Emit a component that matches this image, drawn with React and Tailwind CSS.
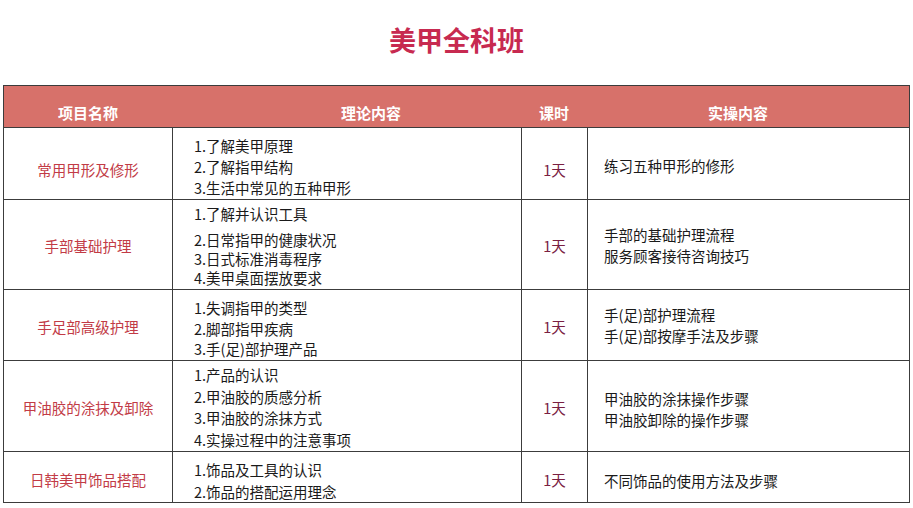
import React from "react";

const rows = [
  {
    name: "常用甲形及修形",
    h: "h-[72px]",
    side: "pt-[13px]",
    theory: ["1.了解美甲原理", "2.了解指甲结构", "3.生活中常见的五种甲形"],
    theoryCls: "pt-[7px] leading-[21px]",
    first: "",
    practice: ["练习五种甲形的修形"],
    practiceCls: "pt-[3px]",
  },
  {
    name: "手部基础护理",
    h: "h-[90px]",
    side: "pt-[2px]",
    theory: ["1.了解并认识工具", "2.日常指甲的健康状况", "3.日式标准消毒程序", "4.美甲桌面摆放要求"],
    theoryCls: "pt-[4px] leading-[19px]",
    first: "mb-[7px]",
    practice: ["手部的基础护理流程", "服务顾客接待咨询技巧"],
    practiceCls: "pt-[0px]",
  },
  {
    name: "手足部高级护理",
    h: "h-[71px]",
    side: "pt-[4px]",
    theory: ["1.失调指甲的类型", "2.脚部指甲疾病", "3.手(足)部护理产品"],
    theoryCls: "pt-[8px] leading-[20.5px]",
    first: "",
    practice: ["手(足)部护理流程", "手(足)部按摩手法及步骤"],
    practiceCls: "pt-[0px]",
  },
  {
    name: "甲油胶的涂抹及卸除",
    h: "h-[91px]",
    side: "pt-[4px]",
    theory: ["1.产品的认识", "2.甲油胶的质感分析", "3.甲油胶的涂抹方式", "4.实操过程中的注意事项"],
    theoryCls: "pt-[3px] leading-[21.7px]",
    first: "",
    practice: ["甲油胶的涂抹操作步骤", "甲油胶卸除的操作步骤"],
    practiceCls: "pt-[5px]",
  },
  {
    name: "日韩美甲饰品搭配",
    h: "h-[51px]",
    side: "pt-[4px]",
    theory: ["1.饰品及工具的认识", "2.饰品的搭配运用理念"],
    theoryCls: "pt-[7px] leading-[22px]",
    first: "",
    practice: ["不同饰品的使用方法及步骤"],
    practiceCls: "pt-[6px]",
  },
];

function App() {
  return (
    <div
      className="w-[913px] h-[508px] bg-white overflow-hidden"
      style={{ fontFamily: '"Noto Sans CJK SC", "Noto Sans", sans-serif' }}
    >
      {/* Title */}
      <div className="h-[85px] pt-[24px] text-center">
        <div className="text-[27px] leading-[32px] font-bold text-[#c72a50]">美甲全科班</div>
      </div>

      {/* Table */}
      <div className="ml-[3px] w-[907px] border border-[#3c3c3c]">
        <div className="h-[41px] grid grid-cols-[168px_349px_66px_1fr] bg-[#d7716a] text-white font-bold text-[15px] leading-[20px] pt-[17px]">
          <div className="text-center">项目名称</div>
          <div className="text-center pl-[49px]">理论内容</div>
          <div className="text-center">课时</div>
          <div className="text-center pr-[20px]">实操内容</div>
        </div>

        {rows.map((r, i) => (
          <div
            key={i}
            className={`${r.h} grid grid-cols-[168px_349px_66px_1fr] border-t border-[#3c3c3c] text-[14.5px]`}
          >
            <div className={`flex items-center justify-center text-[#c23b46] ${r.side}`}>
              {r.name}
            </div>
            <div className={`border-l border-[#3c3c3c] pl-[21px] text-[#1a1a1a] ${r.theoryCls}`}>
              {r.theory.map((t, j) => (
                <div key={j} className={j === 0 ? r.first : ""}>
                  {t}
                </div>
              ))}
            </div>
            <div className={`border-l border-[#3c3c3c] flex items-center justify-center text-[#7a2042] ${r.side}`}>
              1天
            </div>
            <div
              className={`border-l border-[#3c3c3c] pl-[16px] flex flex-col justify-center leading-[21px] text-[#1a1a1a] ${r.practiceCls}`}
            >
              {r.practice.map((t, j) => (
                <div key={j}>{t}</div>
              ))}
            </div>
          </div>
        ))}
      </div>
    </div>
  );
}

export default App;
